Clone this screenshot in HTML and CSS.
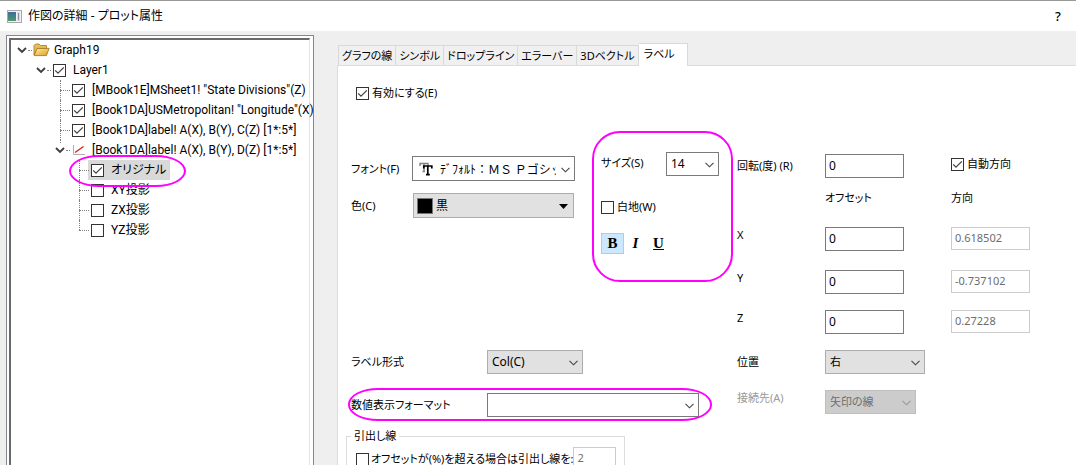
FILE: index.html
```html
<!DOCTYPE html>
<html lang="ja">
<head>
<meta charset="utf-8">
<title>作図の詳細 - プロット属性</title>
<link rel="stylesheet" href="styles.css">
</head>
<body>
<svg class="defs" aria-hidden="true">
  <symbol id="chevron" viewBox="0 0 9 6"><path d="M.5 .8 4.5 4.8 8.5 .8" fill="none" stroke="currentColor" stroke-width="1.1"/></symbol>
  <symbol id="expander" viewBox="0 0 10 7"><path d="M1 1 5 5 9 1" fill="none" stroke="#404040" stroke-width="1.9"/></symbol>
</svg>

<header class="titlebar">
  <svg class="app-icon" width="15" height="13" viewBox="0 0 15 13">
    <defs>
      <linearGradient id="appfill" x1="0" y1="0" x2="0" y2="1"><stop offset="0" stop-color="#3c6c9c"/><stop offset="1" stop-color="#4d9a6c"/></linearGradient>
    </defs>
    <rect x=".5" y=".5" width="14" height="12" fill="#f2f2f2" stroke="#a8a8a8"/>
    <rect x="1" y="2" width="8" height="9" fill="url(#appfill)"/>
    <rect x="10" y="2" width="3" height="9" fill="#cfdcea"/>
    <rect x="11" y="3" width="1" height="7" fill="#7d93b0"/>
  </svg>
  <h1 class="title">作図の詳細 - プロット属性</h1>
  <button class="help" type="button" aria-label="ヘルプ">?</button>
</header>

<main class="dialog">
  <nav class="tree-frame" aria-label="レイヤ">
    <div class="tree-inner">
      <ul class="tree">
        <li>
          <div class="node">
            <span class="twist open"><svg width="10" height="7"><use href="#expander"/></svg></span>
            <svg class="folder" width="17" height="14" viewBox="0 0 17 14">
              <defs><linearGradient id="gold" x1="0" y1="0" x2="1" y2="1"><stop offset="0" stop-color="#fff0a8"/><stop offset="1" stop-color="#dd9c1c"/></linearGradient></defs>
              <path d="M1 12V2.5L2.5 1H6L7.5 2.5H13.5V6H4Z" fill="#e8be57" stroke="#a67a22" stroke-width=".8"/>
              <path d="M1.2 12.6 4 5.4H16.2L13.4 12.6Z" fill="url(#gold)" stroke="#9a701c" stroke-width=".8"/>
            </svg>
            <span>Graph19</span>
          </div>
          <ul>
            <li>
              <div class="node">
                <span class="twist open"><svg width="10" height="7"><use href="#expander"/></svg></span>
                <label class="tick"><input type="checkbox" checked>Layer1</label>
              </div>
              <ul class="branch">
                <li><div class="node"><span class="twist leaf"></span><label class="tick"><input type="checkbox" checked>[MBook1E]MSheet1! "State Divisions"(Z)</label></div></li>
                <li><div class="node"><span class="twist leaf"></span><label class="tick"><input type="checkbox" checked>[Book1DA]USMetropolitan! "Longitude"(X)</label></div></li>
                <li><div class="node"><span class="twist leaf"></span><label class="tick"><input type="checkbox" checked>[Book1DA]label! A(X), B(Y), C(Z) [1*:5*]</label></div></li>
                <li>
                  <div class="node">
                    <span class="twist open"><svg width="10" height="7"><use href="#expander"/></svg></span>
                    <svg class="plot" width="14" height="12" viewBox="0 0 14 12"><path d="M1.5 1V10.5H13" fill="none" stroke="#b0b0b0"/><path d="M3 8.5 11.5 2.5" fill="none" stroke="#e01818" stroke-width="1.3"/></svg>
                    <span>[Book1DA]label! A(X), B(Y), D(Z) [1*:5*]</span>
                  </div>
                  <ul class="branch">
                    <li><div class="node"><span class="twist leaf"></span><label class="tick selected"><input type="checkbox" checked>オリジナル</label><span class="ring ring-node"></span></div></li>
                    <li><div class="node"><span class="twist leaf"></span><label class="tick"><input type="checkbox">XY投影</label></div></li>
                    <li><div class="node"><span class="twist leaf"></span><label class="tick"><input type="checkbox">ZX投影</label></div></li>
                    <li><div class="node"><span class="twist leaf"></span><label class="tick"><input type="checkbox">YZ投影</label></div></li>
                  </ul>
                </li>
              </ul>
            </li>
          </ul>
        </li>
      </ul>
    </div>
  </nav>

  <section class="pages">
    <div class="tabs" role="tablist">
      <button type="button" role="tab">グラフの線</button>
      <button type="button" role="tab">シンボル</button>
      <button type="button" role="tab">ドロップライン</button>
      <button type="button" role="tab">エラーバー</button>
      <button type="button" role="tab">3Dベクトル</button>
      <button type="button" role="tab" aria-selected="true">ラベル</button>
    </div>

    <form class="pane">
      <label class="check enable"><input type="checkbox" checked>有効にする(E)</label>

      <div class="columns">
        <div class="left">
          <div class="text-style">
            <div class="face">
              <label for="font">フォント(F)</label>
              <div class="combo font-combo">
                <svg class="tt" width="14" height="14" viewBox="0 0 14 14">
                  <path d="M1 4V1.5H9V4M5 1.5V9.5M3.5 9.5H6" fill="none" stroke="#808080" stroke-width="1.4"/>
                  <path d="M4.8 6.5V4H12.8V6.5M8.8 4V12.5M7 12.7H10.8" fill="none" stroke="#000" stroke-width="1.7"/>
                </svg>
                <select id="font"><option>ﾃﾞﾌｫﾙﾄ：ＭＳ Ｐゴシック</option></select>
                <svg class="arrow" width="9" height="6"><use href="#chevron"/></svg>
              </div>
              <label for="color">色(C)</label>
              <div class="combo grey color-combo">
                <span class="swatch"></span>
                <select id="color"><option>黒</option></select>
                <svg class="arrow" width="9" height="5" viewBox="0 0 9 5"><path d="M0 0H9L4.5 5Z"/></svg>
              </div>
            </div>

            <div class="size-box">
              <div class="size-row">
                <label for="size">サイズ(S)</label>
                <div class="combo size-combo">
                  <select id="size"><option>14</option></select>
                  <svg class="arrow" width="9" height="6"><use href="#chevron"/></svg>
                </div>
              </div>
              <label class="check"><input type="checkbox">白地(W)</label>
              <div class="styles">
                <button class="on" type="button" aria-pressed="true"><b>B</b></button>
                <button type="button"><i>I</i></button>
                <button type="button"><u>U</u></button>
              </div>
            </div>
          </div>

          <div class="format">
            <label for="form">ラベル形式</label>
            <div class="combo grey form-combo">
              <select id="form"><option>Col(C)</option></select>
              <svg class="arrow" width="9" height="6"><use href="#chevron"/></svg>
            </div>
          </div>
          <div class="format">
            <label for="numeric">数値表示フォーマット</label>
            <div class="combo numeric-combo">
              <select id="numeric"><option></option></select>
              <svg class="arrow" width="9" height="6"><use href="#chevron"/></svg>
            </div>
            <span class="ring ring-format"></span>
          </div>

          <fieldset class="leader">
            <legend>引出し線</legend>
            <label class="check"><input type="checkbox">オフセットが(%)を超える場合は引出し線を:</label>
            <input class="field" type="text" value="2" disabled aria-label="オフセット(%)">
          </fieldset>
        </div>

        <div class="right">
          <label class="low" for="rot">回転(度) (R)</label>
          <input class="field" id="rot" type="text" value="0">
          <label class="check auto"><input type="checkbox" checked>自動方向</label>

          <span></span>
          <span class="heading">オフセット</span>
          <span class="heading">方向</span>

          <label for="ox">X</label>
          <input class="field" id="ox" type="text" value="0">
          <input class="field" type="text" value="0.618502" disabled aria-label="X 方向">

          <label for="oy">Y</label>
          <input class="field" id="oy" type="text" value="0">
          <input class="field" type="text" value="-0.737102" disabled aria-label="Y 方向">

          <label for="oz">Z</label>
          <input class="field" id="oz" type="text" value="0">
          <input class="field" type="text" value="0.27228" disabled aria-label="Z 方向">

          <label class="low" for="pos">位置</label>
          <div class="combo grey pos-combo">
            <select id="pos"><option>右</option></select>
            <svg class="arrow" width="9" height="6"><use href="#chevron"/></svg>
          </div>

          <label class="off" for="link">接続先(A)</label>
          <div class="combo disabled link-combo">
            <select id="link" disabled><option>矢印の線</option></select>
            <svg class="arrow" width="9" height="6"><use href="#chevron"/></svg>
          </div>
        </div>
      </div>
    </form>
  </section>
</main>
</body>
</html>
```
FILE: styles.css
```css
* { box-sizing: border-box; }

body {
  margin: 0;
  height: 100vh;
  display: flex;
  flex-direction: column;
  overflow: hidden;
  background: #efefef;
  color: #000;
  font: 11px/16px "Noto Sans", "Noto Sans CJK JP", sans-serif;
  font-feature-settings: "palt";
  white-space: nowrap;
}

button, input, select {
  margin: 0;
  font: inherit;
  font-feature-settings: inherit;
  color: inherit;
}

ul { list-style: none; margin: 0; padding: 0; }
svg { display: block; flex: none; }
.defs { position: absolute; width: 0; height: 0; }

/* title bar */
.titlebar {
  flex: none;
  height: 31px;
  display: flex;
  align-items: center;
  padding: 0 13px 0 7px;
  border-top: 1px solid #999;
  background: #fff;
}
.title { margin: 0 auto 0 6px; font-size: 12px; font-weight: 400; }
.help { border: 0; padding: 0; width: 10px; background: none; font-size: 13px; font-weight: 500; }

/* two panels */
.dialog { flex: 1; min-height: 0; display: flex; gap: 23px; padding: 4px 0 0 6px; }

.tree-frame {
  flex: none;
  width: 308px;
  padding: 2px 3px 0 2px;
  border: 1px solid #828790;
  border-bottom: 0;
  background: #fff;
}
.tree-inner {
  height: 100%;
  padding: 0 0 0 3px;
  border: solid #696969;
  border-width: 2px 1px 0 2px;
  border-right-color: #e3e3e3;
}
.tree { font-family: Roboto, "Noto Sans CJK JP", sans-serif; font-size: 12px; }
.tree ul { padding-left: 19px; }
.node { position: relative; display: flex; align-items: center; height: 20px; }
.twist { position: relative; flex: none; width: 19px; height: 20px; }
.twist svg { position: absolute; left: 3px; top: 7px; }
.twist.open::after, .twist.leaf::after {
  content: "";
  position: absolute;
  right: 1px;
  top: 10px;
  width: 4px;
  border-top: 1px dotted #808080;
}
.twist.leaf::after { width: 10px; }
.branch > li { position: relative; }
.branch > li::before {
  content: "";
  position: absolute;
  left: 8px;
  top: 0;
  height: 20px;
  border-left: 1px dotted #808080;
}
.branch > li:last-child::before { height: 10px; }
.branch > li:last-child:has(ul)::before { height: 3px; }
.tick { display: flex; align-items: center; height: 20px; gap: 7px; padding: 0 4px 0 1px; }
.tick.selected { background: #d9d9d9; box-shadow: -2px 0 #d9d9d9; }
.folder { margin-right: 4px; }
.plot { margin: 0 6px 0 1px; }

/* check boxes */
input[type="checkbox"] {
  appearance: none;
  flex: none;
  width: 13px;
  height: 13px;
  border: 1px solid #333;
  background: #fff;
}
input[type="checkbox"]:checked {
  background: #fff url("data:image/svg+xml,%3Csvg xmlns='http://www.w3.org/2000/svg' viewBox='0 0 11 11'%3E%3Cpath d='M1.2 5.4 4 8.2 9.8 2.4' fill='none' stroke='%23444' stroke-width='1.3'/%3E%3C/svg%3E");
}
.check { display: flex; align-items: center; gap: 3px; }

/* tabs */
.pages { flex: 1; min-width: 0; display: flex; flex-direction: column; padding-top: 7px; }
.tabs { display: flex; align-items: flex-end; height: 23px; padding-left: 1px; }
.tabs button {
  height: 20px;
  padding: 0 3px;
  border: 1px solid #d9d9d9;
  border-width: 1px 1px 0 0;
  background: #f0f0f0;
}
.tabs button:first-child { border-left-width: 1px; }
.tabs button[aria-selected="true"] {
  position: relative;
  height: 23px;
  margin-bottom: -1px;
  padding: 0 12px 3px 5px;
  background: #fff;
}
.pane {
  flex: 1;
  min-height: 0;
  overflow: hidden;
  padding: 19px 0 0 13px;
  border: solid #dcdcdc;
  border-width: 1px 0 0 1px;
  background: #fff;
}
.enable { margin-left: 5px; }
.columns { display: flex; gap: 4px; padding-top: 30px; }

/* boxed controls */
.combo {
  position: relative;
  display: flex;
  align-items: center;
  height: 24px;
  border: 1px solid #7a7a7a;
  background: #fff;
}
.combo select {
  appearance: none;
  flex: 1;
  min-width: 0;
  height: 100%;
  padding: 0 18px 0 4px;
  border: 0;
  background: none;
  opacity: 1;
}
.arrow { position: absolute; right: 4px; top: 50%; margin-top: -2px; color: #444; pointer-events: none; }
.grey { background: #e1e1e1; border-color: #adadad; }
.disabled { background: #ccc; border-color: #bfbfbf; color: #6d6d6d; }
.disabled .arrow { color: #9a9a9a; }
.field { width: 79px; height: 24px; padding: 0 3px 2px; border: 1px solid #7a7a7a; background: #fff; }
.field:disabled { height: 23px; border-color: #ccc; color: #6d6d6d; }
.right .field, .size-combo select, .form-combo select { font-size: 12px; }
.right .field:disabled { font-size: 11px; }

/* left column */
.left { flex: none; width: 382px; }
.text-style { display: flex; justify-content: space-between; }
.face { display: grid; grid-template-columns: 61px 163px; align-content: start; align-items: center; row-gap: 12px; padding-top: 25px; }
.face .combo { height: 25px; }
.font-combo { padding-left: 6px; }
.font-combo select { padding: 0; margin: 0 18px 0 7px; font: 12px "Noto Sans CJK JP", sans-serif; font-feature-settings: normal; text-overflow: clip; }
.color-combo { margin: 0 1px; padding-left: 3px; }
.color-combo select { padding-left: 3px; font-size: 12px; }
.color-combo .arrow { right: 5px; }
.swatch { width: 16px; height: 16px; border: 1px solid #777; background: #000; }

.size-box {
  width: 141px;
  height: 151px;
  padding: 19px 12px 0 7px;
  border: 2px solid #f0f;
  border-radius: 28px;
}
.size-row { display: flex; justify-content: space-between; margin-bottom: 23px; }
.size-row label { padding-top: 3px; }
.size-combo { width: 53px; }
.styles { display: flex; margin-top: 18px; }
.styles button {
  width: 23px;
  height: 21px;
  padding: 0;
  border: 1px solid transparent;
  background: none;
  font: 700 15px/19px "Liberation Serif", serif;
}
.styles .on { background: #cce8ff; border-color: #99d1ff; }

.format { position: relative; display: grid; grid-template-columns: 136px 1fr; align-items: center; margin-top: 19px; }
.text-style + .format { margin-top: 68px; }
.form-combo { width: 96px; }
.numeric-combo { width: 212px; }

.leader {
  display: flex;
  width: 279px;
  margin: 11px 0 0 -5px;
  padding: 3px 8px 8px 9px;
  border: 1px solid #dcdcdc;
}
.leader legend { margin-left: -5px; padding: 0 3px; }
.leader .check { gap: 2px; height: 24px; }
.leader .field { width: 43px; margin-left: auto; }

/* right column */
.right {
  display: grid;
  grid-template-columns: 88px 126px auto;
  grid-template-rows: 24px 49px 43px 40px 40px 40px 24px;
  align-items: start;
  padding-top: 23px;
}
.low { padding-top: 4px; }
.auto { padding-top: 2px; }
.heading { padding-top: 12px; }
.off { color: #9a9a9a; }
.pos-combo { grid-column: 2 / 4; width: 100px; }
.link-combo { width: 91px; }

/* highlight marks */
.ring { position: absolute; border: 2px solid #f0f; border-radius: 30px / 16px; pointer-events: none; z-index: 1; }
.ring-node { left: -2px; top: -5px; width: 117px; height: 32px; }
.ring-format { left: -3px; top: -5px; width: 364px; height: 33px; }
```
